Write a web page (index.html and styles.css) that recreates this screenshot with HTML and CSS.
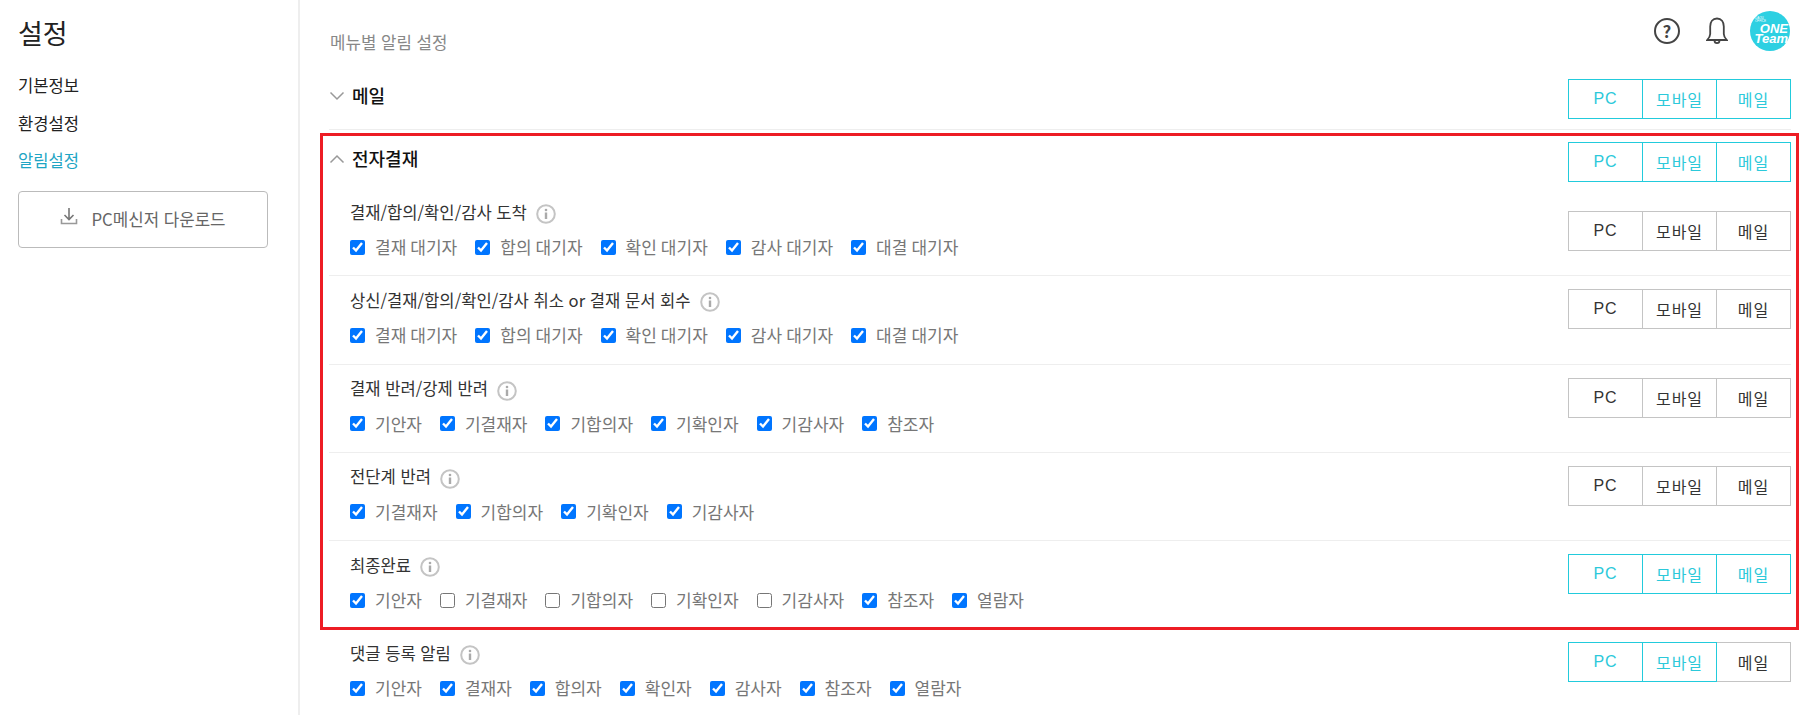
FILE: index.html
```html
<!DOCTYPE html>
<html lang="ko">

<head>
    <meta charset="UTF-8" />
    <meta name="viewport" content="width=device-width, initial-scale=1.0" />
    <title>설정</title>
    <link rel="stylesheet" href="styles.css">
</head>

<body>

    <aside class="sidebar">
        <h1>설정</h1>
        <a href="#" class="side-link">기본정보</a>
        <a href="#" class="side-link">환경설정</a>
        <a href="#" class="side-link active">알림설정</a>
        <a href="#" class="download-btn">
            <svg width="18" height="20" viewBox="0 0 18 20" fill="none" stroke="#777" stroke-width="1.6">
                <path d="M9 1v11M4.500 8 9 12.500 13.500 8" />
                <path d="M1.500 12v4.500h15V12" stroke="#999" />
            </svg>
            <span>PC메신저 다운로드</span>
        </a>
    </aside>

    <main>
        <div class="top-bar">
            <div class="page-title">메뉴별 알림 설정</div>
            <div class="top-icons">
                <span class="help-icon">?</span>
                <svg class="bell" width="22" height="28" viewBox="0 0 22 28" fill="none" stroke="#444" stroke-width="1.800">
                    <path d="M11 1.500c-4.500 0-6.800 3.500-6.800 8v7.500c0 2.500-1.200 4-3 6h19.600c-1.800-2-3-3.500-3-6V9.500c0-4.500-2.300-8-6.800-8z" />
                    <path d="M8.500 23.500c0 3.500 5 3.500 5 0" />
                </svg>
                <div class="avatar"><span class="avatar-small">DAOU OFFICE</span><span class="avatar-name">ONE Team</span></div>
            </div>
        </div>

        <section class="section closed">
            <div class="section-head">
                <svg class="chevron" width="16" height="10" viewBox="0 0 16 10" fill="none" stroke="#999" stroke-width="1.500">
                    <path d="M1.500 1.500 8 8l6.500-6.500" />
                </svg>
                <h2>메일</h2>
                <div class="seg">
                    <button class="on">PC</button><button class="on">모바일</button><button class="on">메일</button>
                </div>
            </div>
        </section>

        <section class="section">
            <div class="section-head">
                <svg class="chevron" width="16" height="10" viewBox="0 0 16 10" fill="none" stroke="#999" stroke-width="1.500">
                    <path d="M1.500 8.500 8 2l6.500 6.500" />
                </svg>
                <h2>전자결재</h2>
                <div class="seg">
                    <button class="on">PC</button><button class="on">모바일</button><button class="on">메일</button>
                </div>
            </div>

            <div class="row first">
                <div class="row-body">
                    <div class="row-title">결재/합의/확인/감사 도착
                        <svg class="info" width="20" height="20" viewBox="0 0 20 20"><circle cx="10" cy="10" r="8.800" fill="none" stroke="#c4c4c4" stroke-width="2" /><circle cx="10" cy="6" r="1.300" fill="#aaa" /><rect x="8.800" y="8.500" width="2.400" height="6.500" fill="#aaa" /></svg>
                    </div>
                    <div class="checks">
                        <label><input type="checkbox" checked>결재 대기자</label>
                        <label><input type="checkbox" checked>합의 대기자</label>
                        <label><input type="checkbox" checked>확인 대기자</label>
                        <label><input type="checkbox" checked>감사 대기자</label>
                        <label><input type="checkbox" checked>대결 대기자</label>
                    </div>
                </div>
                <div class="seg">
                    <button>PC</button><button>모바일</button><button>메일</button>
                </div>
            </div>

            <div class="row">
                <div class="row-body">
                    <div class="row-title">상신/결재/합의/확인/감사 취소 or 결재 문서 회수
                        <svg class="info" width="20" height="20" viewBox="0 0 20 20"><circle cx="10" cy="10" r="8.800" fill="none" stroke="#c4c4c4" stroke-width="2" /><circle cx="10" cy="6" r="1.300" fill="#aaa" /><rect x="8.800" y="8.500" width="2.400" height="6.500" fill="#aaa" /></svg>
                    </div>
                    <div class="checks">
                        <label><input type="checkbox" checked>결재 대기자</label>
                        <label><input type="checkbox" checked>합의 대기자</label>
                        <label><input type="checkbox" checked>확인 대기자</label>
                        <label><input type="checkbox" checked>감사 대기자</label>
                        <label><input type="checkbox" checked>대결 대기자</label>
                    </div>
                </div>
                <div class="seg">
                    <button>PC</button><button>모바일</button><button>메일</button>
                </div>
            </div>

            <div class="row">
                <div class="row-body">
                    <div class="row-title">결재 반려/강제 반려
                        <svg class="info" width="20" height="20" viewBox="0 0 20 20"><circle cx="10" cy="10" r="8.800" fill="none" stroke="#c4c4c4" stroke-width="2" /><circle cx="10" cy="6" r="1.300" fill="#aaa" /><rect x="8.800" y="8.500" width="2.400" height="6.500" fill="#aaa" /></svg>
                    </div>
                    <div class="checks">
                        <label><input type="checkbox" checked>기안자</label>
                        <label><input type="checkbox" checked>기결재자</label>
                        <label><input type="checkbox" checked>기합의자</label>
                        <label><input type="checkbox" checked>기확인자</label>
                        <label><input type="checkbox" checked>기감사자</label>
                        <label><input type="checkbox" checked>참조자</label>
                    </div>
                </div>
                <div class="seg">
                    <button>PC</button><button>모바일</button><button>메일</button>
                </div>
            </div>

            <div class="row">
                <div class="row-body">
                    <div class="row-title">전단계 반려
                        <svg class="info" width="20" height="20" viewBox="0 0 20 20"><circle cx="10" cy="10" r="8.800" fill="none" stroke="#c4c4c4" stroke-width="2" /><circle cx="10" cy="6" r="1.300" fill="#aaa" /><rect x="8.800" y="8.500" width="2.400" height="6.500" fill="#aaa" /></svg>
                    </div>
                    <div class="checks">
                        <label><input type="checkbox" checked>기결재자</label>
                        <label><input type="checkbox" checked>기합의자</label>
                        <label><input type="checkbox" checked>기확인자</label>
                        <label><input type="checkbox" checked>기감사자</label>
                    </div>
                </div>
                <div class="seg">
                    <button>PC</button><button>모바일</button><button>메일</button>
                </div>
            </div>

            <div class="row last">
                <div class="row-body">
                    <div class="row-title">최종완료
                        <svg class="info" width="20" height="20" viewBox="0 0 20 20"><circle cx="10" cy="10" r="8.800" fill="none" stroke="#c4c4c4" stroke-width="2" /><circle cx="10" cy="6" r="1.300" fill="#aaa" /><rect x="8.800" y="8.500" width="2.400" height="6.500" fill="#aaa" /></svg>
                    </div>
                    <div class="checks">
                        <label><input type="checkbox" checked>기안자</label>
                        <label><input type="checkbox">기결재자</label>
                        <label><input type="checkbox">기합의자</label>
                        <label><input type="checkbox">기확인자</label>
                        <label><input type="checkbox">기감사자</label>
                        <label><input type="checkbox" checked>참조자</label>
                        <label><input type="checkbox" checked>열람자</label>
                    </div>
                </div>
                <div class="seg">
                    <button class="on">PC</button><button class="on">모바일</button><button class="on">메일</button>
                </div>
            </div>

            <!-- red annotation box drawn over the section -->
            <div class="highlight"></div>
        </section>

        <div class="row last">
            <div class="row-body">
                <div class="row-title">댓글 등록 알림
                    <svg class="info" width="20" height="20" viewBox="0 0 20 20"><circle cx="10" cy="10" r="8.800" fill="none" stroke="#c4c4c4" stroke-width="2" /><circle cx="10" cy="6" r="1.300" fill="#aaa" /><rect x="8.800" y="8.500" width="2.400" height="6.500" fill="#aaa" /></svg>
                </div>
                <div class="checks">
                    <label><input type="checkbox" checked>기안자</label>
                    <label><input type="checkbox" checked>결재자</label>
                    <label><input type="checkbox" checked>합의자</label>
                    <label><input type="checkbox" checked>확인자</label>
                    <label><input type="checkbox" checked>감사자</label>
                    <label><input type="checkbox" checked>참조자</label>
                    <label><input type="checkbox" checked>열람자</label>
                </div>
            </div>
            <div class="seg">
                <button class="on">PC</button><button class="on">모바일</button><button>메일</button>
            </div>
        </div>
    </main>

</body>

</html>
```

FILE: styles.css
```css
* {
    box-sizing: border-box;
    font-family: 'Noto Sans CJK KR', 'Noto Sans', sans-serif;
}

body {
    margin: 0;
    background-color: white;
    display: flex;
    height: 100vh;
    overflow: hidden;
    color: #222;
}

.sidebar {
    width: 300px;
    flex-shrink: 0;
    border-right: 2px solid #eee;
    padding: 15px 30px 0 18px;
    display: flex;
    flex-direction: column;
}

.sidebar h1 {
    margin: 0 0 16px;
    font-size: 27px;
    font-weight: 400;
    line-height: 36px;
}

.side-link {
    color: #222;
    text-decoration: none;
    font-size: 16.600px;
    line-height: 37.500px;
}

.side-link.active {
    color: #1ea5c4;
}

.download-btn {
    margin-top: 11px;
    height: 57px;
    border: 1px solid #bbb;
    border-radius: 4px;
    display: flex;
    align-items: center;
    justify-content: center;
    gap: 13px;
    color: #666;
    text-decoration: none;
    font-size: 16.800px;
}

.download-btn svg {
    margin-top: -5px;
}

main {
    flex: 1;
    padding: 0 17px 0 29px;
}

.top-bar {
    height: 67px;
    display: flex;
    justify-content: space-between;
    align-items: flex-start;
}

.page-title {
    margin: 29px 0 0 1px;
    color: #888;
    font-size: 16.800px;
    line-height: 26px;
}

.top-icons {
    display: flex;
    align-items: center;
    margin: 11px 1px 0 0;
}

.help-icon {
    width: 26px;
    height: 26px;
    border: 2px solid #444;
    border-radius: 50%;
    color: #444;
    font-size: 17px;
    font-weight: 700;
    line-height: 22px;
    text-align: center;
    margin-right: 26px;
}

.bell {
    margin-right: 22px;
}

.avatar {
    width: 40px;
    height: 40px;
    border-radius: 50%;
    background-color: #2dd0e2;
    color: white;
    display: flex;
    flex-direction: column;
    justify-content: flex-end;
    padding: 0 2px 7px 0;
}

.avatar span {
    font-family: 'Liberation Sans', sans-serif;
}

.avatar .avatar-small {
    margin-left: 5px;
    width: 14px;
    font-size: 3px;
    line-height: 3.750px;
}

.avatar .avatar-name {
    align-self: flex-end;
    width: 35px;
    text-align: right;
    font-style: italic;
    font-weight: 700;
    font-size: 13px;
    line-height: 10px;
}

.section {
    position: relative;
}

.section.closed {
    border-bottom: 1px solid #eee;
    padding-bottom: 4px;
}

.section-head {
    display: flex;
    align-items: center;
    padding: 12px 0 6px;
}

.section-head h2 {
    margin: -8px 0 0 7px;
    font-size: 18px;
    font-weight: 500;
    color: #111;
}

.chevron {
    margin: -6px 0 0 0;
}

.seg {
    margin-left: auto;
    display: flex;
    flex-shrink: 0;
}

.seg button {
    width: 75px;
    height: 40px;
    margin-left: -1px;
    background-color: white;
    border: 1px solid #c4c4c4;
    color: #333;
    font-family: 'Liberation Sans', 'Noto Sans CJK KR', sans-serif;
    font-size: 16px;
    font-weight: 400;
    letter-spacing: 1px;
    padding: 0;
}

.seg button:first-child {
    margin-left: 0;
}

.seg button.on {
    border-color: #22cbdc;
    color: #2cc9da;
}

/* keep the teal edge when the next button is off */
.seg button.on + button:not(.on) {
    width: 74px;
    margin-left: 0;
    border-left: none;
}

.row {
    display: flex;
    align-items: flex-start;
    padding: 13px 0 0 21px;
    height: 88.250px;
    border-bottom: 1px solid #eee;
}

.row.first .seg {
    margin-top: 10px;
}

.row.last {
    border-bottom: none;
}

.row-title {
    display: flex;
    align-items: center;
    gap: 9px;
    font-size: 16.600px;
    line-height: 24px;
    color: #333;
    margin-top: -2px;
}

.info {
    margin-top: 5px;
}

.checks {
    display: flex;
    gap: 18px;
    margin-top: 11px;
}

.checks label {
    display: flex;
    align-items: center;
    gap: 10px;
    font-size: 17px;
    line-height: 24px;
    word-spacing: -0.700px;
    color: #777;
}

.checks input {
    width: 15px;
    height: 15px;
    margin: 0;
}

.highlight {
    position: absolute;
    top: 3px;
    left: -9px;
    right: -8px;
    bottom: -1px;
    border: 3px solid #ed1c24;
    pointer-events: none;
}
```
